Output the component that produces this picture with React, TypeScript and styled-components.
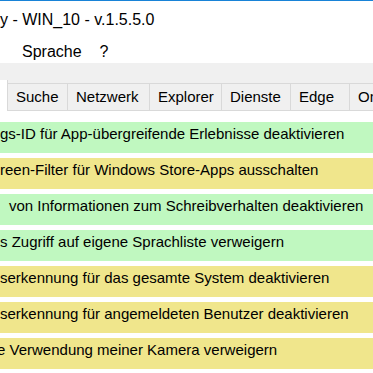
import styled, { createGlobalStyle } from "styled-components";

type Tab = { label: string; width: number };
type Row = { text: string; tone: "green" | "yellow"; indent: number };

const tabs: Tab[] = [
  { label: "Suche", width: 60 },
  { label: "Netzwerk", width: 82 },
  { label: "Explorer", width: 72 },
  { label: "Dienste", width: 69 },
  { label: "Edge", width: 59 },
  { label: "OneDrive", width: 80 },
];

const rows: Row[] = [
  { text: "gs-ID für App-übergreifende Erlebnisse deaktivieren", tone: "green", indent: 0 },
  { text: "reen-Filter für Windows Store-Apps ausschalten", tone: "yellow", indent: 0 },
  { text: "von Informationen zum Schreibverhalten deaktivieren", tone: "green", indent: 9 },
  { text: "s Zugriff auf eigene Sprachliste verweigern", tone: "green", indent: 0 },
  { text: "serkennung für das gesamte System deaktivieren", tone: "yellow", indent: 0 },
  { text: "serkennung für angemeldeten Benutzer deaktivieren", tone: "yellow", indent: 0 },
  { text: "e Verwendung meiner Kamera verweigern", tone: "yellow", indent: -3 },
];

const GlobalStyle = createGlobalStyle`
  html, body {
    margin: 0;
    padding: 0;
    background: #ffffff;
  }
  body {
    font-family: "Liberation Sans", Arial, sans-serif;
    color: #000000;
  }
`;

const Window = styled.div`
  width: 373px;
  height: 373px;
  overflow: hidden;
  display: flex;
  flex-direction: column;
  background: #ffffff;
  border-top: 1px solid #1883d7;
  box-sizing: border-box;
`;

const TitleBar = styled.div`
  height: 36px;
  display: flex;
  align-items: center;
  font-size: 16px;
  white-space: nowrap;
  padding-top: 1px;
  box-sizing: border-box;
`;

const MenuBar = styled.div`
  height: 26px;
  display: flex;
  align-items: center;
  gap: 18px;
  padding-left: 22px;
  padding-top: 4px;
  font-size: 16px;
  box-sizing: border-box;
`;

const TabStrip = styled.div`
  background: #f0f0f0;
  height: 48px;
  display: flex;
  align-items: flex-end;
  border-bottom: 1px solid #d9d9d9;
  box-sizing: border-box;
`;

const SelectedTab = styled.div`
  width: 8px;
  height: 31px;
  background: #ffffff;
  border-right: 1px solid #d9d9d9;
  margin-bottom: -1px;
  box-sizing: border-box;
  flex-shrink: 0;
`;

const TabItem = styled.div<{ $width: number }>`
  flex-shrink: 0;
  width: ${(p) => p.$width}px;
  height: 27px;
  background: #f0f0f0;
  border: 1px solid #d9d9d9;
  border-left: none;
  border-bottom: none;
  box-sizing: border-box;
  font-size: 15px;
  line-height: 25px;
  padding-left: 8px;
  white-space: nowrap;
  overflow: hidden;
`;

const Page = styled.div`
  flex: 1;
  display: flex;
  flex-direction: column;
  gap: 5px;
  padding-top: 11px;
  background: #ffffff;
`;

const OptionRow = styled.div<{ $tone: "green" | "yellow" }>`
  height: 31px;
  flex-shrink: 0;
  background: ${(p) => (p.$tone === "green" ? "#c0f8c0" : "#f0e68c")};
  font-size: 15px;
  line-height: 17px;
  padding-top: 3px;
  box-sizing: border-box;
  white-space: nowrap;
  overflow: hidden;
`;

const RowText = styled.span<{ $indent: number }>`
  display: inline-block;
  margin-left: ${(p) => p.$indent}px;
`;

export default function App() {
  return (
    <>
      <GlobalStyle />
      <Window>
        <TitleBar>y - WIN_10 - v.1.5.5.0</TitleBar>
        <MenuBar>
          <span>Sprache</span>
          <span>?</span>
        </MenuBar>
        <TabStrip>
          <SelectedTab />
          {tabs.map((t) => (
            <TabItem key={t.label} $width={t.width}>
              {t.label}
            </TabItem>
          ))}
        </TabStrip>
        <Page>
          {rows.map((r) => (
            <OptionRow key={r.text} $tone={r.tone}>
              <RowText $indent={r.indent}>{r.text}</RowText>
            </OptionRow>
          ))}
        </Page>
      </Window>
    </>
  );
}
